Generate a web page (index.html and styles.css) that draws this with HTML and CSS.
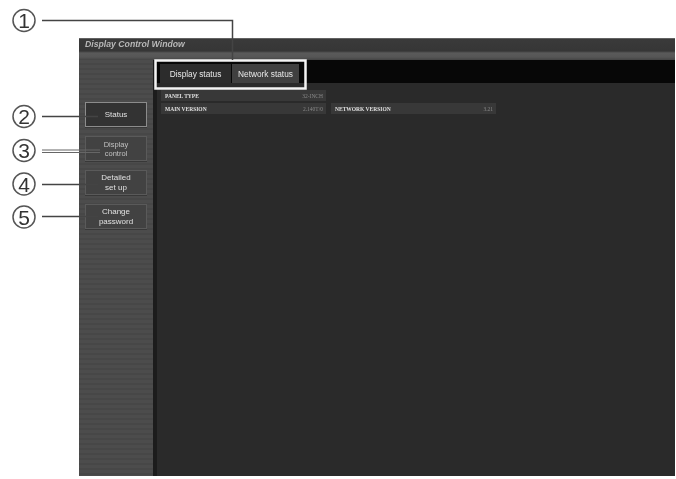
FILE: index.html
```html
<!DOCTYPE html>
<html lang="en">
<head>
<meta charset="utf-8">
<title>Display Control Window</title>
<link rel="stylesheet" href="styles.css">
</head>
<body>
<div class="page">
  <div class="window">
    <header class="titlebar"><span class="title">Display Control Window</span></header>
    <div class="main">
      <nav class="sidebar">
        <div class="btn btn-active">Status</div>
        <div class="btn btn-dim">Display<br>control</div>
        <div class="btn">Detailed<br>set up</div>
        <div class="btn">Change<br>password</div>
      </nav>
      <div class="divider"></div>
      <section class="content">
        <div class="tabs">
          <div class="tab tab-first">Display status</div>
          <div class="tab tab-second">Network status</div>
        </div>
        <div class="table">
          <div class="row">
            <div class="cell"><span>PANEL TYPE</span><span class="val">32-INCH</span></div>
          </div>
          <div class="row">
            <div class="cell"><span>MAIN VERSION</span><span class="val">2.140T/0</span></div>
            <div class="cell"><span>NETWORK VERSION</span><span class="val">3.21</span></div>
          </div>
        </div>
      </section>
    </div>
  </div>
  <svg class="callouts" width="676" height="479" viewBox="0 0 676 479">
    <rect class="hl" x="155.500" y="60.500" width="150" height="28"/>
    <path class="lead" d="M42 20.500H232.500V60"/>
    <path class="lead" d="M42 116.500H98"/>
    <path class="lead lead-double" d="M42 150H100M42 152.500H100"/>
    <path class="lead" d="M42 184.500H98"/>
    <path class="lead" d="M42 216.500H98"/>
    <circle class="ring" cx="24" cy="20.500" r="11"/>
    <circle class="ring" cx="24" cy="116.500" r="11"/>
    <circle class="ring" cx="24" cy="150.500" r="11"/>
    <circle class="ring" cx="24" cy="184" r="11"/>
    <circle class="ring" cx="24" cy="217" r="11"/>
    <text class="num" x="24" y="28">1</text>
    <text class="num" x="24" y="124">2</text>
    <text class="num" x="24" y="158">3</text>
    <text class="num" x="24" y="191.500">4</text>
    <text class="num" x="24" y="224.500">5</text>
  </svg>
</div>
</body>
</html>
```
FILE: styles.css
```css
html, body {
  margin: 0;
  padding: 0;
  background: #fff;
}
body {
  width: 676px;
  height: 479px;
  overflow: hidden;
  font-family: "Liberation Sans", Arial, sans-serif;
}
.page {
  position: relative;
  width: 676px;
  height: 479px;
  padding: 38px 0 0 79px;
  box-sizing: border-box;
}
.window {
  width: 596px;
  height: 438px;
  display: flex;
  flex-direction: column;
  background: #2a2a2a;
  filter: blur(0.7px);
}
.titlebar {
  height: 22px;
  flex: none;
  box-sizing: border-box;
  padding: 0 0 0 6px;
  background: linear-gradient(#8a8a8a 0, #3a3a3a 1px, #363636 13px, #5a5a5a 15px, #565656 19px, #444 22px);
}
.title {
  display: block;
  font-size: 8.700px;
  line-height: 13px;
  font-style: italic;
  font-weight: bold;
  color: #b8b8b8;
}
.main {
  flex: 1;
  display: flex;
  min-height: 0;
}
.sidebar {
  width: 74px;
  flex: none;
  box-sizing: border-box;
  padding-top: 42px;
  display: flex;
  flex-direction: column;
  align-items: center;
  gap: 9px;
  background: repeating-linear-gradient(#4c4c4c 0, #4c4c4c 3px, #474747 3px, #474747 5px);
}
.btn {
  width: 62px;
  height: 25px;
  box-sizing: border-box;
  display: flex;
  align-items: center;
  justify-content: center;
  text-align: center;
  font-size: 8px;
  line-height: 10px;
  color: #e0e0e0;
  background: #424242;
  border: 1px solid #5a5a5a;
  box-shadow: 0 1px 0 #383838;
}
.btn-active {
  background: #333;
  border-color: #8c8c8c;
}
.btn-dim {
  color: #c0c0c0;
  font-size: 7.500px;
  line-height: 9px;
}
.divider {
  width: 4px;
  flex: none;
  background: #1c1c1c;
}
.content {
  flex: 1;
  min-width: 0;
  display: flex;
  flex-direction: column;
}
.tabs {
  height: 23px;
  flex: none;
  box-sizing: border-box;
  padding: 4px 0 0 3px;
  display: flex;
  gap: 1px;
  background: #070707;
}
.tab {
  height: 19px;
  box-sizing: border-box;
  display: flex;
  align-items: center;
  justify-content: center;
  font-size: 8.300px;
  color: #e8e8e8;
}
.tab-first {
  width: 71px;
  background: #2c2c2c;
}
.tab-second {
  width: 67px;
  background: #404040;
}
.table {
  padding: 7px 0 0 4px;
  display: flex;
  flex-direction: column;
  gap: 2px;
}
.row {
  display: flex;
  gap: 5px;
}
.cell {
  width: 165px;
  height: 11px;
  box-sizing: border-box;
  padding: 0 3px 0 4px;
  display: flex;
  align-items: center;
  justify-content: space-between;
  font-family: "Liberation Serif", serif;
  font-size: 5.500px;
  font-weight: bold;
  color: #e0e0e0;
  background: #383838;
}
.val {
  color: #888;
  font-weight: normal;
}
.callouts {
  position: absolute;
  left: 0;
  top: 0;
  filter: blur(0.4px);
}
.hl {
  fill: none;
  stroke: #f4f4f4;
  stroke-width: 2.500;
}
.lead {
  fill: none;
  stroke: #444;
  stroke-width: 1.500;
}
.lead-double {
  stroke-width: 1.200;
  stroke: #666;
}
.ring {
  fill: #fff;
  stroke: #555;
  stroke-width: 1.500;
}
.num {
  font-family: "Liberation Sans", Arial, sans-serif;
  font-size: 21px;
  fill: #333;
  text-anchor: middle;
}
```
